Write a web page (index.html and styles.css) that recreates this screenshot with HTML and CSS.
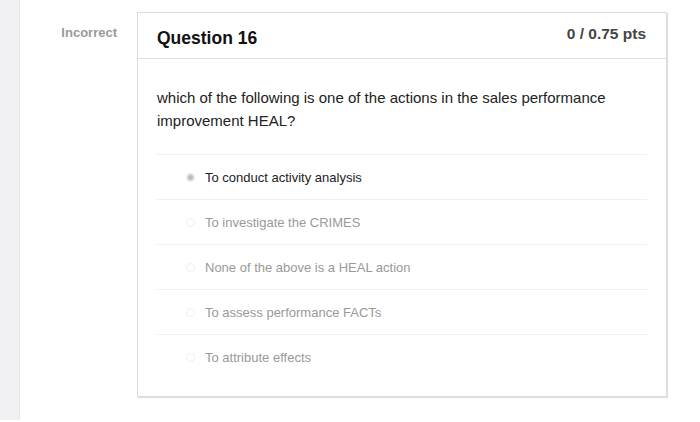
FILE: index.html
```html
<!DOCTYPE html>
<html lang="en">
  <head>
    <meta charset="UTF-8" />
    <meta name="viewport" content="width=device-width, initial-scale=1.0" />
    <link rel="stylesheet" href="styles.css">
  </head>
  <body>
    <div class="page">
      <div class="side-strip"></div>
      <div class="status">Incorrect</div>
      <div class="question">
        <div class="question-header">
          <span class="question-title">Question 16</span>
          <span class="question-points">0 / 0.75 pts</span>
        </div>
        <div class="question-body">
          <p class="question-text">which of the following is one of the actions in the sales performance improvement HEAL?</p>
          <div class="answers">
            <div class="answer selected"><span class="radio"></span>To conduct activity analysis</div>
            <div class="answer"><span class="radio"></span>To investigate the CRIMES</div>
            <div class="answer"><span class="radio"></span>None of the above is a HEAL action</div>
            <div class="answer"><span class="radio"></span>To assess performance FACTs</div>
            <div class="answer"><span class="radio"></span>To attribute effects</div>
          </div>
        </div>
      </div>
    </div>
  </body>
</html>
```

FILE: styles.css
```css
/* 页面整体 */
body {
  margin: 0;
  background-color: #fff;
  font-family: "Liberation Sans", Arial, sans-serif;
}

.page {
  display: flex;
  align-items: flex-start;
  height: 422px;
}

/* 左侧灰条 */
.side-strip {
  width: 20px;
  height: 420px;
  background-color: #f1f0f5;
  border-right: 1px solid #e8e7ec;
  box-sizing: border-box;
}

/* 答题状态 */
.status {
  width: 117px;
  box-sizing: border-box;
  padding-right: 20px;
  padding-top: 25px;
  text-align: right;
  font-size: 13px;
  font-weight: bold;
  color: #9a9a9a;
}

/* 题目卡片 */
.question {
  width: 530px;
  margin-top: 12px;
  box-sizing: border-box;
  border: 1px solid #dcdcdc;
  box-shadow: 1px 1px 1px rgba(0, 0, 0, 0.12);
}

.question-header {
  display: flex;
  justify-content: space-between;
  align-items: center;
  height: 45px;
  padding: 0 20px 0 19px;
  border-bottom: 1px solid #dcdcdc;
}

.question-title {
  font-size: 17.5px;
  font-weight: bold;
  color: #111;
  padding-top: 6px;
}

.question-points {
  font-size: 15.5px;
  font-weight: bold;
  color: #444;
  padding-bottom: 4px;
}

.question-body {
  padding: 27px 19px 17px 19px;
}

.question-text {
  margin: 0 0 22px 0;
  font-size: 15px;
  line-height: 23px;
  color: #222;
}

/* 选项 */
.answer {
  display: flex;
  align-items: center;
  height: 44px;
  padding-left: 29px;
  border-top: 1px solid #efefef;
  font-size: 13px;
  color: #999;
}

.answer.selected {
  color: #222;
}

.radio {
  width: 9px;
  height: 9px;
  margin-right: 10px;
  border-radius: 50%;
  border: 1px solid #f0f0f0;
  box-sizing: border-box;
}

.answer.selected .radio {
  border: 2px solid #e6e6e6;
  background-color: #bdbdbd;
}
```
